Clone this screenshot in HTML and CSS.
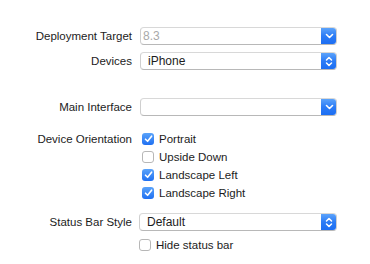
FILE: index.html
```html
<!DOCTYPE html>
<html lang="en">
<head>
    <meta charset="UTF-8">
    <title>Deployment Info</title>
    <link rel="stylesheet" href="styles.css">
</head>
<body>
    <div class="panel">
        <div class="row row-target">
            <div class="label">Deployment Target</div>
            <div class="popup combo">
                <span class="value muted">8.3</span>
                <span class="arrow">
                    <svg width="9" height="6" viewBox="0 0 9 6"><path d="M1.5 1.5 L4.5 4.5 L7.5 1.5" fill="none" stroke="#fff" stroke-width="1.6" stroke-linecap="round" stroke-linejoin="round"/></svg>
                </span>
            </div>
        </div>
        <div class="row row-devices">
            <div class="label">Devices</div>
            <div class="popup">
                <span class="value">iPhone</span>
                <span class="arrow">
                    <svg width="8" height="11" viewBox="0 0 8 11"><path d="M1.5 4 L4 1.5 L6.5 4 M1.5 7 L4 9.5 L6.5 7" fill="none" stroke="#fff" stroke-width="1.5" stroke-linecap="round" stroke-linejoin="round"/></svg>
                </span>
            </div>
        </div>
        <div class="row row-main">
            <div class="label">Main Interface</div>
            <div class="popup combo">
                <span class="value"></span>
                <span class="arrow">
                    <svg width="9" height="6" viewBox="0 0 9 6"><path d="M1.5 1.5 L4.5 4.5 L7.5 1.5" fill="none" stroke="#fff" stroke-width="1.6" stroke-linecap="round" stroke-linejoin="round"/></svg>
                </span>
            </div>
        </div>
        <div class="row row-orient">
            <div class="label">Device Orientation</div>
            <div class="checks">
                <label class="check"><span class="box on"><svg width="9" height="8" viewBox="0 0 9 8"><path d="M1.5 4.2 L3.6 6.3 L7.6 1.2" fill="none" stroke="#fff" stroke-width="1.6" stroke-linecap="round" stroke-linejoin="round"/></svg></span>Portrait</label>
                <label class="check"><span class="box"></span>Upside Down</label>
                <label class="check"><span class="box on"><svg width="9" height="8" viewBox="0 0 9 8"><path d="M1.5 4.2 L3.6 6.3 L7.6 1.2" fill="none" stroke="#fff" stroke-width="1.6" stroke-linecap="round" stroke-linejoin="round"/></svg></span>Landscape Left</label>
                <label class="check"><span class="box on"><svg width="9" height="8" viewBox="0 0 9 8"><path d="M1.5 4.2 L3.6 6.3 L7.6 1.2" fill="none" stroke="#fff" stroke-width="1.6" stroke-linecap="round" stroke-linejoin="round"/></svg></span>Landscape Right</label>
            </div>
        </div>
        <div class="row row-status">
            <div class="label">Status Bar Style</div>
            <div class="popup">
                <span class="value">Default</span>
                <span class="arrow">
                    <svg width="8" height="11" viewBox="0 0 8 11"><path d="M1.5 4 L4 1.5 L6.5 4 M1.5 7 L4 9.5 L6.5 7" fill="none" stroke="#fff" stroke-width="1.5" stroke-linecap="round" stroke-linejoin="round"/></svg>
                </span>
            </div>
        </div>
        <div class="row row-hide">
            <div class="label"></div>
            <label class="check"><span class="box"></span>Hide status bar</label>
        </div>
    </div>
</body>
</html>
```

FILE: styles.css
```css
body {
    margin: 0;
    background: #fff;
    font-family: "Liberation Sans", Arial, sans-serif;
    font-size: 11.5px;
    color: #1c1c1c;
}

.panel {
    display: flex;
    flex-direction: column;
    padding-left: 8px;
}

.row {
    display: grid;
    grid-template-columns: 124px 197px;
    column-gap: 8px;
    align-items: center;
}

.row-target { margin-top: 27px; }
.row-devices { margin-top: 7px; }
.row-main { margin-top: 28px; }
.row-orient { margin-top: 14px; align-items: start; }
.row-status { margin-top: 11px; }
.row-hide { margin-top: 5px; }

.label {
    text-align: right;
    white-space: nowrap;
}

.row-orient .label {
    line-height: 18px;
}

.popup {
    display: flex;
    align-items: center;
    height: 18px;
    box-sizing: border-box;
    border: 1px solid #cfcfcf;
    border-top-color: #d8d8d8;
    border-bottom-color: #b8b8b8;
    border-radius: 4px;
    background: #fff;
    overflow: hidden;
}

.row-status .popup {
    margin-left: -1px;
    width: 198px;
}

.value {
    flex: 1;
    padding-left: 7px;
    font-size: 12px;
}

.combo .value {
    padding-left: 2px;
}

.muted {
    color: #a9a9a9;
}

.arrow {
    width: 16px;
    align-self: stretch;
    margin: -1px -1px -1px 0;
    display: flex;
    align-items: center;
    justify-content: center;
    background: linear-gradient(#62a8fb, #2c7cf6 50%, #1a6cf2);
    border-radius: 0 4px 4px 0;
}

.checks {
    display: flex;
    flex-direction: column;
    padding-left: 2px;
}

.check {
    display: flex;
    align-items: center;
    height: 18px;
    gap: 5px;
    white-space: nowrap;
}

.box {
    width: 12px;
    height: 12px;
    box-sizing: border-box;
    border: 1px solid #b7b7b7;
    border-radius: 3px;
    background: #fff;
    display: flex;
    align-items: center;
    justify-content: center;
}

.box.on {
    border: none;
    background: linear-gradient(#5aa3fa, #1f70f2);
}

.row-hide .check {
    margin-left: -1px;
}
```
